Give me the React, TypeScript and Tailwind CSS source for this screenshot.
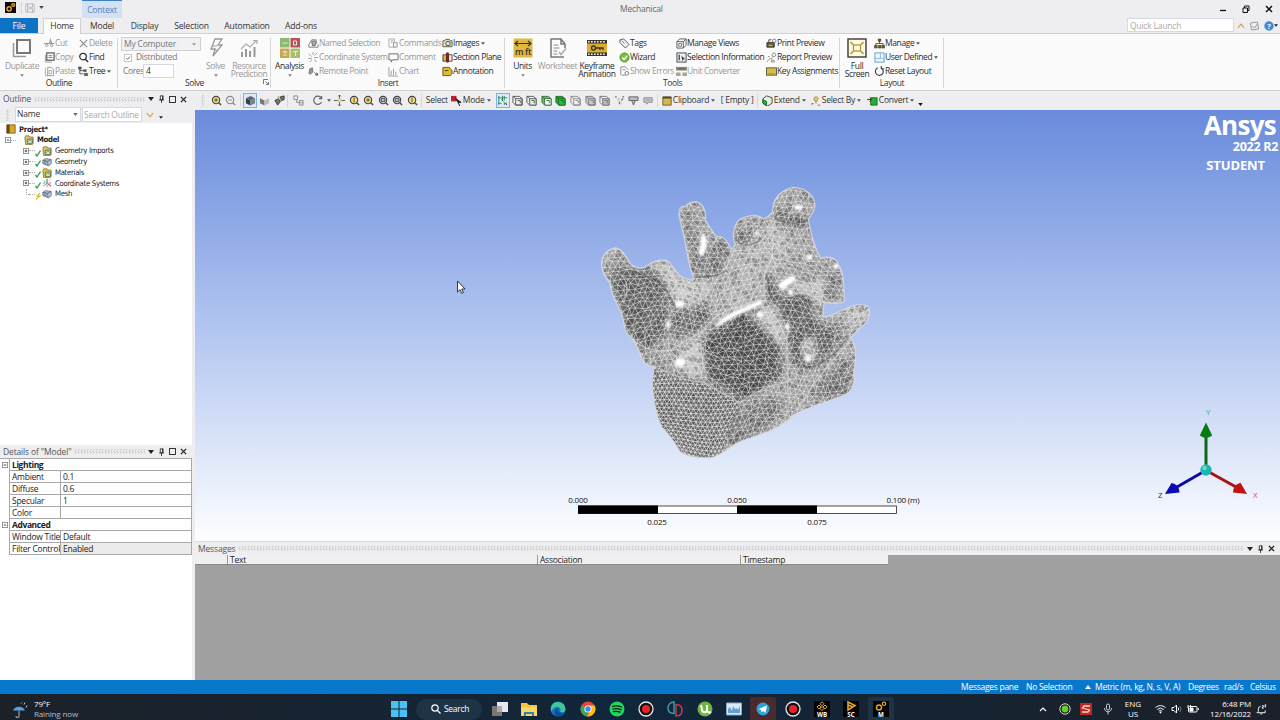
import type { ReactNode } from 'react';
import { clsx } from 'clsx';

/* ---------- icons ---------- */

type IconProps = { children: ReactNode; className?: string; box?: number };

const Icon = ({ children, className = 'w-[11px] h-[11px]', box = 12 }: IconProps) => (
  <svg viewBox={`0 0 ${box} ${box}`} className={clsx('shrink-0', className)} fill="none" stroke="#555" strokeWidth={1}>
    {children}
  </svg>
);

const Caret = ({ className = 'w-[4px] h-[3px] text-[#555]' }: { className?: string }) => (
  <svg viewBox="0 0 6 4" className={clsx('shrink-0', className)} fill="currentColor">
    <path d="M0 0h6L3 4z" />
  </svg>
);

const CutIcon = () => (
  <Icon>
    <path d="M0 6h11M6 6l1-4 1.500 4" stroke="#999" strokeWidth="1.200" />
    <circle cx="3" cy="8" r="1.3" stroke="#999" />
    <circle cx="8.500" cy="8" r="1.300" stroke="#999" />
  </Icon>
);
const CopyIcon = () => (
  <Icon>
    <path d="M1.500 3v8h7" stroke="#999" />
    <rect x="3" y="1" width="8" height="8" stroke="#777" strokeWidth="1.600" />
    <path d="M5 4h4M5 6h4" stroke="#777" />
  </Icon>
);
const PasteIcon = () => (
  <Icon>
    <path d="M1.500 2v8.500h3" stroke="#aaa" />
    <path d="M4 1.500h4l2.500 2.500v6.500H4z" stroke="#999" />
    <path d="M5.500 5h3v3.500h-3z" stroke="#aaa" />
  </Icon>
);
const DeleteIcon = () => (
  <Icon><path d="M2 2l8 8M10 2l-8 8" stroke="#888" strokeWidth="1.200" /></Icon>
);
const FindIcon = () => (
  <Icon>
    <circle cx="5.500" cy="5" r="3.600" stroke="#333" strokeWidth="1.400" />
    <path d="M8 8l3 3" stroke="#333" strokeWidth="1.600" />
  </Icon>
);
const TreeIcon = () => (
  <Icon>
    <path d="M2 3v5.500h4M2 5h4" stroke="#555" />
    <path d="M.5 1h3v2.500h-3zM6 4h3v2H6zM7 8h3.500v2.500H7z" fill="#6a6445" stroke="#444" strokeWidth=".6" />
  </Icon>
);
const NamedSelIcon = () => (
  <Icon>
    <path d="M1 10h10V7M1 10V7l3-5h5v4" stroke="#777" />
    <path d="M4 4l3-1 2 2-1 3-3 .5z" fill="#aaa" stroke="#666" />
  </Icon>
);
const CoordIcon = () => (
  <Icon><path d="M1 2l3 3M10 1L7 4M0 7h4M7 6h4M2 11l2-3M9 11L7 8M5.500 0v3" stroke="#999" /></Icon>
);
const RemoteIcon = () => (
  <Icon>
    <path d="M1 8l1-5 3-1v5l-3 2z" fill="#999" stroke="#777" />
    <path d="M6 6l2 2" stroke="#999" />
    <circle cx="9.500" cy="9" r="1.300" fill="#888" stroke="#777" />
  </Icon>
);
const CommandsIcon = () => (
  <Icon>
    <path d="M1 1h6v9H1zM3 3h3M3 5h2" stroke="#aaa" />
    <path d="M6 5h4v5H6z" stroke="#999" fill="#eee" />
  </Icon>
);
const CommentIcon = () => (
  <Icon><path d="M1 2h10v6.500H5L3.500 11V8.500H1z" stroke="#666" /></Icon>
);
const ChartIcon = () => (
  <Icon><path d="M1 1v10h10M3.500 10V5M6 10V3M8.500 10V6" stroke="#999" /></Icon>
);
const ImagesIcon = () => (
  <Icon>
    <path d="M1 3h2l1-1.500h4L9 3h2v6.500H1z" fill="#f1e5a8" stroke="#555" />
    <circle cx="6.500" cy="6" r="2.500" fill="#ddd" stroke="#444" />
  </Icon>
);
const SectionPlaneIcon = () => (
  <Icon>
    <path d="M1 3h4v7H1z" fill="#d5b52d" stroke="#444" />
    <path d="M7 3h4v7H7z" fill="#f4efd8" stroke="#444" />
    <path d="M5 1h2v10H5z" fill="#8a2626" stroke="#702020" />
  </Icon>
);
const AnnotationIcon = () => (
  <Icon><path d="M1 1.500h7L11 5v3l-2 2.500H1z" fill="#e2bd25" stroke="#5f5118" /><path d="M3 5h4" stroke="#333" /></Icon>
);
const TagsIcon = () => (
  <Icon><path d="M1 2l4-1 6 6-4 4-6-6z" fill="#eee" stroke="#555" /><path d="M3 3l3 3" stroke="#777" /></Icon>
);
const WizardIcon = () => (
  <Icon><circle cx="6" cy="6" r="5" fill="#79bf3b" stroke="#4f9a28" /><path d="M3.500 6l2 2.200L9 4" stroke="#fff" strokeWidth="1.400" /></Icon>
);
const ErrorsIcon = () => (
  <Icon><path d="M2 10V1h5l3 3M3 10h4M4 4h3" stroke="#888" /><circle cx="8.500" cy="8" r="2" stroke="#777" /></Icon>
);
const ManageViewsIcon = () => (
  <Icon><path d="M1 4l3-3h7v7l-3 3H1zM1 4h7v7M8 4l3-3" stroke="#555" /><path d="M3 6h3v3H3z" stroke="#777" /></Icon>
);
const SelInfoIcon = () => (
  <Icon>
    <rect x="1" y="1" width="10" height="10" fill="#e8eef6" stroke="#444" />
    <path d="M3.500 3v6" stroke="#345" strokeWidth="1.400" />
    <path d="M6 4l4 4-2 0-1 2z" fill="#333" stroke="none" />
  </Icon>
);
const UnitIcon = () => (
  <Icon>
    <path d="M0 1h12v4H0z" fill="#8f8b74" stroke="none" />
    <path d="M0 7h5v4H0zM7 7h5v4H7z" fill="#aaa696" stroke="none" />
    <path d="M2 3h8" stroke="#555" />
  </Icon>
);
const PrintPreviewIcon = () => (
  <Icon>
    <path d="M1 5h8v5H1z" fill="#6c6330" stroke="#333" />
    <path d="M3 5V2h3" stroke="#444" />
    <circle cx="9" cy="3" r="1.900" stroke="#777" />
    <path d="M3 8h4" stroke="#ddd067" />
  </Icon>
);
const ReportIcon = () => (
  <Icon>
    <path d="M1 11l3-4 2 1 1-3" stroke="#a3974d" />
    <path d="M2 5h2M6 9h3v2H6z" stroke="#888" />
    <circle cx="8.500" cy="3" r="2" stroke="#888" />
  </Icon>
);
const KeyIcon = () => (
  <Icon><rect x=".5" y="2" width="11" height="8" fill="#d6bb4d" stroke="#63592b" /><path d="M2 8.500h8" stroke="#a08d3e" /></Icon>
);
const ManageIcon = () => (
  <Icon>
    <path d="M6 3v3M2 8V6h8v2" stroke="#555" />
    <path d="M4.500 1h3v2.500h-3zM.5 8h3v3h-3zM4.700 8h3v3h-3zM8.600 8h3v3h-3z" fill="#6d6023" stroke="#443d1d" strokeWidth=".6" />
  </Icon>
);
const UserDefIcon = () => (
  <Icon><rect x="1" y="1" width="10" height="10" fill="#eef7fc" stroke="#5a9dc4" /><path d="M7 1v6M1 7h10" stroke="#8bbdd8" /></Icon>
);
const ResetIcon = () => (
  <Icon><path d="M8 2.200A4.300 4.300 0 1 1 4 2M8 0v3h3" stroke="#444" strokeWidth="1.300" /></Icon>
);

/* ---------- ribbon ---------- */

type CmdProps = { icon: ReactNode; text: string; off?: boolean; caret?: boolean };

const Cmd = ({ icon, text, off, caret }: CmdProps) => (
  <div className={clsx('flex items-center h-[14px] whitespace-nowrap', off ? 'text-[#999]' : 'text-[#2b2b2b]')}>
    {icon}
    <span>{text}</span>
    {caret && <Caret className="w-[4px] h-[3px] ml-[2px] text-[#555]" />}
  </div>
);

const Col = ({ className, children }: { className: string; children: ReactNode }) => (
  <div className={clsx('flex flex-col shrink-0 pt-[3px]', className)}>{children}</div>
);

type BigProps = { icon: ReactNode; lines: string[]; className: string; off?: boolean; caret?: boolean };

const Big = ({ icon, lines, className, off, caret }: BigProps) => (
  <div className={clsx('flex flex-col items-center shrink-0 pt-[4px] whitespace-nowrap', off ? 'text-[#999]' : 'text-[#2b2b2b]', className)}>
    {icon}
    <div className="mt-[4px] leading-[7.500px] text-center">
      {lines.map((l) => <div key={l}>{l}</div>)}
    </div>
    {caret && <Caret className="w-[4px] h-[3px] mt-[4px] text-[#888]" />}
  </div>
);

const Group = ({ label, className, children }: { label: string; className: string; children: ReactNode }) => (
  <div className={clsx('flex flex-col shrink-0 relative', className)}>
    <div className="flex h-[44px]">{children}</div>
    <div className="text-center text-[#333] leading-[10px]">{label}</div>
    <div className="absolute right-0 top-[4px] w-px h-[50px] bg-[#d6d6d8]" />
  </div>
);

const bigIcon = 'w-[20px] h-[20px]';

const Ribbon = () => (
  <div className="flex h-[58px] bg-[#fbfbfb] border-t border-b border-[#d0d0d2] text-[8.500px] tracking-[-0.38px] shrink-0">
    <Group label="Outline" className="w-[118px]">
      <Big
        off caret className="w-[44px]" lines={['Duplicate']}
        icon={
          <Icon className={bigIcon} box={20}>
            <path d="M1.500 5v13.500H14" stroke="#999" strokeWidth="1.500" />
            <rect x="5" y="2" width="13" height="13" stroke="#777" strokeWidth="2" />
          </Icon>
        }
      />
      <Col className="w-[34px]">
        <Cmd off icon={<CutIcon />} text="Cut" />
        <Cmd off icon={<CopyIcon />} text="Copy" />
        <Cmd off icon={<PasteIcon />} text="Paste" />
      </Col>
      <Col className="w-[38px]">
        <Cmd off icon={<DeleteIcon />} text="Delete" />
        <Cmd icon={<FindIcon />} text="Find" />
        <Cmd icon={<TreeIcon />} text="Tree" caret />
      </Col>
    </Group>

    <Group label="Solve" className="w-[153px]">
      <Col className="w-[83px] pl-[3px] text-[#777]">
        <div className="flex items-center justify-between w-[80px] h-[14px] border border-[#d0d0d4] bg-[#f1f1f3] pl-[2px] pr-[4px] tracking-[-0.2px]">
          <span>My Computer</span>
          <Caret className="w-[4px] h-[3px] text-[#999]" />
        </div>
        <div className="flex items-center h-[14px] pl-[3px]">
          <div className="w-[8px] h-[8px] border border-[#c6c6c6] bg-white">
            <svg viewBox="0 0 8 8" className="w-full h-full" fill="none" stroke="#666" strokeWidth="1.200"><path d="M1.500 4l2 2 3-4" /></svg>
          </div>
          <span className="ml-[4px] tracking-[-0.3px]">Distributed</span>
        </div>
        <div className="flex items-center h-[14px] pl-[2px]">
          <span className="w-[20px]">Cores</span>
          <div className="w-[31px] h-[14px] border border-[#d3d7e0] bg-white text-[#333] pl-[2px] leading-[12px]">4</div>
        </div>
      </Col>
      <Big
        off caret className="w-[29px]" lines={['Solve']}
        icon={
          <Icon className={bigIcon} box={20}>
            <path d="M9 1l7-0-4 6h4L7 18l2-7H5z" stroke="#999" strokeWidth="1.300" />
            <path d="M6 8h5M8 12h3" stroke="#999" />
          </Icon>
        }
      />
      <Big
        off className="w-[38px]" lines={['Resource', 'Prediction']}
        icon={
          <Icon className={bigIcon} box={20}>
            <path d="M3 19v-5M7 19v-8M11 19v-6M15.500 19V9" stroke="#999" strokeWidth="2" />
            <path d="M2 11l5-5 4 3 6-6M14 2.500h4V6" stroke="#aaa" strokeWidth="1.200" />
          </Icon>
        }
      />
      <svg viewBox="0 0 6 6" className="absolute right-[2px] bottom-[5px] w-[6px] h-[6px]" fill="none" stroke="#777"><path d="M.5 5V.5H5M2.500 2.500L5 5M5.500 3v2.500H3" /></svg>
    </Group>

    <Group label="Insert" className="w-[234px]">
      <Big
        caret className="w-[37px]" lines={['Analysis']}
        icon={
          <Icon className={bigIcon} box={20}>
            <path d="M0 0h9.500v9.500H0z" fill="#8cba6f" stroke="none" />
            <path d="M10.500 0H20v9.500h-9.500z" fill="#b5555a" stroke="none" />
            <path d="M0 10.500h9.500V20H0z" fill="#c7a64f" stroke="none" />
            <path d="M10.500 10.500H20V20h-9.500z" fill="#a9be6e" stroke="none" />
            <path d="M2.500 5h5M13.500 3h3v4h-3zM2.500 14h5M3 17h4M5 12.500v3M13 13.500h5M15.500 13v5" stroke="#e9ead2" />
          </Icon>
        }
      />
      <Col className="w-[80px]">
        <Cmd icon={<NamedSelIcon />} text="Named Selection" off />
        <Cmd icon={<CoordIcon />} text="Coordinate System" off />
        <Cmd icon={<RemoteIcon />} text="Remote Point" off />
      </Col>
      <Col className="w-[54px]">
        <Cmd icon={<CommandsIcon />} text="Commands" off />
        <Cmd icon={<CommentIcon />} text="Comment" off />
        <Cmd icon={<ChartIcon />} text="Chart" off />
      </Col>
      <Col className="w-[62px]">
        <Cmd icon={<ImagesIcon />} text="Images" caret />
        <Cmd icon={<SectionPlaneIcon />} text="Section Plane" />
        <Cmd icon={<AnnotationIcon />} text="Annotation" />
      </Col>
    </Group>

    <Group label="Tools" className="w-[335px]">
      <Big
        caret className="w-[35px]" lines={['Units']}
        icon={
          <Icon className={bigIcon} box={20}>
            <path d="M.5 .5h19v19H.5z" fill="#e0b840" stroke="none" />
            <path d="M2 5.500h16M5 3L2 5.500 5 8M15 3l3 2.500L15 8" stroke="#3b3420" strokeWidth="1.200" />
            <text x="10" y="17" textAnchor="middle" fontSize="9" fontWeight="600" fill="#3b3420" stroke="none">m ft</text>
          </Icon>
        }
      />
      <Big
        off className="w-[35px]" lines={['Worksheet']}
        icon={
          <Icon className={bigIcon} box={20}>
            <path d="M17 10V6l-4-5H3v18h13M13 1v5h4" stroke="#777" strokeWidth="1.500" />
            <path d="M5.500 7h5M5.500 10h6M5.500 13h4M5.500 16h4" stroke="#888" />
            <path d="M11 14l2 2.500 5-6" stroke="#aaa" strokeWidth="1.500" />
          </Icon>
        }
      />
      <Big
        className="w-[44px]" lines={['Keyframe', 'Animation']}
        icon={
          <Icon className={bigIcon} box={20}>
            <path d="M0 2h20v16H0z" fill="#3a3424" stroke="none" />
            <path d="M0 5.500h20v9H0z" fill="#d9ae35" stroke="none" />
            <path d="M1 3.700h18M1 16.300h18" stroke="#eee" strokeWidth="1.600" strokeDasharray="1.700 1.300" />
            <circle cx="6.500" cy="10" r="2" stroke="#3a3424" strokeWidth="1.300" />
            <path d="M8.500 10H16v2M13 10v2" stroke="#3a3424" strokeWidth="1.300" />
          </Icon>
        }
      />
      <Col className="w-[57px]">
        <Cmd icon={<TagsIcon />} text="Tags" />
        <Cmd icon={<WizardIcon />} text="Wizard" />
        <Cmd icon={<ErrorsIcon />} text="Show Errors" off />
      </Col>
      <Col className="w-[90px]">
        <Cmd icon={<ManageViewsIcon />} text="Manage Views" />
        <Cmd icon={<SelInfoIcon />} text="Selection Information" />
        <Cmd icon={<UnitIcon />} text="Unit Converter" off />
      </Col>
      <Col className="w-[73px]">
        <Cmd icon={<PrintPreviewIcon />} text="Print Preview" />
        <Cmd icon={<ReportIcon />} text="Report Preview" />
        <Cmd icon={<KeyIcon />} text="Key Assignments" />
      </Col>
    </Group>

    <Group label="Layout" className="w-[104px]">
      <Big
        className="w-[34px]" lines={['Full', 'Screen']}
        icon={
          <Icon className={bigIcon} box={20}>
            <rect x="1" y="1" width="18" height="18" fill="#fdfbe8" stroke="#3a3a34" strokeWidth="1.400" />
            <rect x="6.500" y="7" width="7" height="6" stroke="#b59a2b" strokeWidth="1.300" />
            <path d="M3.500 4l3 3M16.500 4l-3 3M3.500 16l3-3M16.500 16l-3-3" stroke="#b59a2b" strokeWidth="1.500" />
          </Icon>
        }
      />
      <Col className="w-[68px]">
        <Cmd icon={<ManageIcon />} text="Manage" caret />
        <Cmd icon={<UserDefIcon />} text="User Defined" caret />
        <Cmd icon={<ResetIcon />} text="Reset Layout" />
      </Col>
    </Group>
  </div>
);

/* ---------- title and tabs ---------- */

const GearsIcon = ({ className }: { className: string }) => (
  <svg viewBox="0 0 12 12" className={className} fill="none" stroke="#e9a72e" strokeWidth="1.500">
    <path d="M0 0h12v12H0z" fill="#0d0b08" stroke="none" />
    <circle cx="4.500" cy="7.500" r="2.300" />
    <circle cx="9" cy="3.300" r="1.500" />
  </svg>
);

const TitleBar = () => (
  <div className="flex h-[18px] items-center text-[8.500px] tracking-[-0.2px] shrink-0">
    <div className="flex items-center w-[82px] pl-[5px] pb-[3px]">
      <GearsIcon className="w-[11px] h-[11px]" />
      <div className="w-px h-[12px] bg-[#d4d4d6] ml-[5px] mr-[3px]" />
      <Icon className="w-[10px] h-[10px]">
        <path d="M1 1h9l1 1v9H1zM3 1v4h6V1M3 11V7h6v4" stroke="#a9b0bb" />
      </Icon>
      <Caret className="w-[5px] h-[3px] ml-[4px] text-[#444]" />
    </div>
    <div className="w-[40px] h-[18px] bg-[#d3e1f5] border-t border-[#3d7fc8] text-[#5580b8] text-center leading-[18px]">Context</div>
    <div className="flex-1 pl-[498px] text-[#666] leading-[18px]">Mechanical</div>
    <div className="flex items-center gap-[15px] pr-[7px]">
      <svg viewBox="0 0 8 8" className="w-[8px] h-[8px]" stroke="#111" strokeWidth="1.300"><path d="M1 5.500h6" /></svg>
      <svg viewBox="0 0 8 8" className="w-[8px] h-[8px]" stroke="#111" fill="none"><path d="M1 3h4.500v4.500H1zM2.500 3V1H7v4.500H5.500" /></svg>
      <svg viewBox="0 0 8 8" className="w-[8px] h-[8px]" stroke="#111" strokeWidth="1.500"><path d="M1 1l6 6M7 1L1 7" /></svg>
    </div>
  </div>
);

const TabRow = () => (
  <div className="flex h-[15px] items-stretch text-[8.600px] tracking-[-0.2px] leading-[16px] text-[#333] shrink-0">
    <div className="w-[38px] bg-[#0b72c5] text-white text-center">File</div>
    <div className="w-[5px]" />
    <div className="w-[38px] bg-[#fbfbfb] border border-b-0 border-[#d0d0d2] text-center leading-[14px] h-[16px] relative">Home</div>
    {[
      ['Model', 'w-[42px]'],
      ['Display', 'w-[43px]'],
      ['Selection', 'w-[51px]'],
      ['Automation', 'w-[60px]'],
      ['Add-ons', 'w-[48px]'],
    ].map(([name, w]) => (
      <div key={name} className={clsx('text-center', w)}>{name}</div>
    ))}
    <div className="flex-1" />
    <div className="w-[107px] h-[14px] border border-[#d5d9e2] bg-white text-[#aaa] text-[8.500px] leading-[13px] pl-[2px]">Quick Launch</div>
    <div className="flex items-center gap-[4px] pl-[3px] pr-[2px]">
      <svg viewBox="0 0 9 6" className="w-[8px] h-[6px]" fill="none" stroke="#d6a437" strokeWidth="1.300"><path d="M1 5l3.500-4L8 5" /></svg>
      <svg viewBox="0 0 10 10" className="w-[11px] h-[10px]" fill="none" stroke="#999"><path d="M1 2l7-1 1 7-7 1zM3 5l2 2 3-4" /></svg>
      <div className="flex items-center">
        <svg viewBox="0 0 10 10" className="w-[10px] h-[10px]">
          <circle cx="5" cy="5" r="4.700" fill="#3c8ad4" />
          <text x="5" y="7.700" fontSize="7.500" fontWeight="700" fill="#fff" textAnchor="middle">?</text>
        </svg>
        <Caret className="w-[4px] h-[3px] text-[#222]" />
      </div>
    </div>
  </div>
);

/* ---------- left panels ---------- */

const dots = 'bg-[repeating-conic-gradient(#d6d6d8_0_25%,#efeff1_0_50%)] bg-[size:3px_3px]';

const Pin = () => (
  <svg viewBox="0 0 8 10" className="w-[7px] h-[8px]" fill="none" stroke="#222"><path d="M2.500 1h3.500v5H2.500zM5.300 1v5M1 6.200h6M4 6v4" /></svg>
);
const Cross = () => (
  <svg viewBox="0 0 8 8" className="w-[7px] h-[7px]" stroke="#222" strokeWidth="1.500"><path d="M1 1l6 6M7 1L1 7" /></svg>
);

const PanelHeader = ({ title, square = true, className }: { title: string; square?: boolean; className: string }) => (
  <div className={clsx('flex items-center bg-[#eeeef0] text-[8.500px] tracking-[-0.15px] text-[#555] shrink-0', className)}>
    <span className="leading-[12px]">{title}</span>
    <div className={clsx('flex-1 h-[5px] mx-[3px]', dots)} />
    <div className="flex items-center gap-[4px]">
      <Caret className="w-[6px] h-[4px] text-[#222]" />
      <Pin />
      {square && <div className="w-[7px] h-[7px] border border-[#333]" />}
      <Cross />
    </div>
  </div>
);

const FolderIcon = ({ tint = '#d9c56a' }: { tint?: string }) => (
  <Icon className="w-[10px] h-[10px]">
    <path d="M1 3l1-2h4l1 1.500h4V10l-1 1.500H2z" fill={tint} stroke="#887631" />
    <path d="M4 5h6v5H4z" fill="#e8ecd8" stroke="#4f654d" />
    <path d="M5 8l2-2 2 2" stroke="#357a5c" />
  </Icon>
);
const SolidIcon = () => (
  <Icon className="w-[10px] h-[10px]">
    <path d="M1 4l3-2 7 1v5l-3 2.500L1 8z" fill="#c3ccd6" stroke="#566779" />
    <path d="M1 4l6 1 4-2M7 5v5" stroke="#566779" />
    <circle cx="4" cy="6.500" r="1.200" stroke="#566779" />
  </Icon>
);
const AxesIcon = () => (
  <Icon className="w-[10px] h-[10px]">
    <path d="M6 6V1" stroke="#3a9a4f" strokeWidth="1.400" />
    <path d="M5 7L1 10M2 3l2 2M9 3l1-1M1 6h3M8 6h3M6 8v3" stroke="#7a889b" />
    <path d="M7 7l4 3" stroke="#d45454" strokeWidth="1.400" />
    <circle cx="6" cy="6.500" r="1" fill="#37a99a" stroke="none" />
  </Icon>
);
const Expander = ({ minus }: { minus?: boolean }) => (
  <svg viewBox="0 0 7 7" className="w-[6px] h-[6px] shrink-0" fill="#fff" stroke="#888"><rect x=".5" y=".5" width="6" height="6" /><path d={minus ? 'M2 3.500h3' : 'M2 3.500h3M3.500 2v3'} stroke="#333" /></svg>
);
const Check = ({ bolt }: { bolt?: boolean }) => (
  <svg viewBox="0 0 6 8" className="w-[6px] h-[8px] shrink-0 mt-[3px]" fill="none" strokeWidth="1.300">
    {bolt ? <path d="M5 1L2 4h3L1 7.500" stroke="#e3c52a" /> : <path d="M.5 5l1.500 2L5.500 1.500" stroke="#339a4c" />}
  </svg>
);

const treeItems = [
  { name: 'Geometry Imports', icon: <FolderIcon /> },
  { name: 'Geometry', icon: <SolidIcon /> },
  { name: 'Materials', icon: <FolderIcon tint="#e6c63f" /> },
  { name: 'Coordinate Systems', icon: <AxesIcon /> },
  { name: 'Mesh', icon: <SolidIcon />, leaf: true },
];

const OutlinePanel = () => (
  <div className="flex flex-col h-[353px] shrink-0">
    <PanelHeader title="Outline" className="h-[14px] pl-[3px] pr-[5px]" />
    <div className="flex items-center h-[17px] bg-[#eeeef0] text-[8.500px] tracking-[-0.15px] pl-[6px] shrink-0">
      <div className={clsx('w-[4px] h-[12px]', dots)} />
      <div className="flex items-center justify-between ml-[5px] w-[66px] h-[15px] bg-white border border-[#d5d9e2] pl-[1px] pr-[2px] text-[#333]">
        <span>Name</span>
        <Caret className="w-[5px] h-[3px] text-[#666]" />
      </div>
      <div className="ml-px w-[60px] h-[15px] leading-[13px] bg-white border border-[#d5d9e2] pl-[1px] text-[#aaa] tracking-[-0.25px] whitespace-nowrap">Search Outline</div>
      <svg viewBox="0 0 9 6" className="w-[8px] h-[6px] ml-[4px]" fill="none" stroke="#d6a437" strokeWidth="1.300"><path d="M1 1l3.500 4L8 1" /></svg>
      <Caret className="w-[4px] h-[3px] ml-[5px] mt-[6px] text-[#222]" />
    </div>
    <div className="flex-1 bg-white pt-px font-['DejaVu_Sans_Condensed','DejaVu_Sans',sans-serif] text-[7.700px] tracking-[-0.3px] text-[#222] whitespace-nowrap">
      <div className="flex items-center h-[10.800px] pl-[6px] font-bold">
        <Icon className="w-[10px] h-[10px]">
          <path d="M1 1h3v10H1z" fill="#6d4b16" stroke="#5c4219" />
          <path d="M4 1h7v10H4z" fill="#d9a829" stroke="#7c5a1a" />
        </Icon>
        <span className="ml-[3px]">Project*</span>
      </div>
      <div className="flex items-center h-[10.800px] pl-[5px] font-bold">
        <Expander minus />
        <div className="w-[5px] border-t border-dotted border-[#aaa] mr-[8px]" />
        <FolderIcon />
        <span className="ml-[3px]">Model</span>
      </div>
      {treeItems.map(({ name, icon, leaf }) => (
        <div key={name} className="flex items-center h-[10.800px] pl-[23px]">
          {leaf ? <div className="ml-[3px] w-[3px] h-[6px] mb-[5px] border-l border-b border-dotted border-[#aaa]" /> : <Expander />}
          <div className="w-[6px] border-t border-dotted border-[#aaa]" />
          <Check bolt={leaf} />
          <span className="ml-px">{icon}</span>
          <span className="ml-[3px]">{name}</span>
        </div>
      ))}
    </div>
  </div>
);

const details: [string, string?][] = [
  ['Lighting'],
  ['Ambient', '0.1'],
  ['Diffuse', '0.6'],
  ['Specular', '1'],
  ['Color', ''],
  ['Advanced'],
  ['Window Title', 'Default'],
  ['Filter Control', 'Enabled'],
];

const DetailsPanel = () => (
  <div className="flex flex-col flex-1 bg-white">
    <PanelHeader title={'Details of "Model"'} className="h-[13px] pl-[3px] pr-[5px]" />
    <div className="border-t border-[#a8a8a8] text-[8.500px] tracking-[-0.25px] text-[#222]">
      {details.map(([name, value]) => (
        <div key={name} className="flex h-[12.060px]">
          <div className="w-[9px] flex items-center pl-[2px]">{value === undefined && <Expander minus />}</div>
          {value === undefined ? (
            <div className="flex-1 border-l border-b border-r border-[#a8a8a8] font-bold pl-[2px] leading-[11px] tracking-[-0.4px]">{name}</div>
          ) : (
            <>
              <div className="w-[51px] border-l border-b border-[#a8a8a8] pl-[2px] leading-[11px] whitespace-nowrap">{name}</div>
              <div className={clsx('flex-1 border-l border-b border-r border-[#a8a8a8] pl-[2px] leading-[11px]', value === 'Enabled' && 'bg-[#ebebe9]')}>{value}</div>
            </>
          )}
        </div>
      ))}
    </div>
  </div>
);

/* ---------- graphics toolbar ---------- */

const Zoomer = ({ color = '#444', fill = '#f3dc7a', mark }: { color?: string; fill?: string; mark?: string }) => (
  <Icon>
    <circle cx="5.500" cy="5.500" r="4" fill={fill} stroke={color} strokeWidth="1.200" />
    <path d="M8.500 8.500l2.500 2.500" stroke={color} strokeWidth="1.500" />
    {mark && <path d={mark} stroke={color} />}
  </Icon>
);

const Cube = ({ stroke = '#666', fill = '#f2f2f2', front = 'none' }: { stroke?: string; fill?: string; front?: string }) => (
  <Icon>
    <path d="M1 1.500h7L11 4v7H4L1 8z" fill={fill} stroke={stroke} />
    <path d="M4 4h7v7H4z" fill={front} stroke={stroke} />
    <path d="M1 1.500L4 4M6 6h3v3" stroke={stroke} />
  </Icon>
);

const SolidCube = ({ top, left, right }: { top: string; left: string; right: string }) => (
  <Icon>
    <g stroke="none">
      <path d="M6 1l5 2.500-5 2.500-5-2.500z" fill={top} />
      <path d="M1 3.500L6 6v5.500L1 9z" fill={left} />
      <path d="M11 3.500L6 6v5.500L11 9z" fill={right} />
    </g>
  </Icon>
);

const Cell = ({ className = 'w-[14.600px]', on, children }: { className?: string; on?: boolean; children?: ReactNode }) => (
  <div className={clsx('flex items-center justify-center shrink-0 h-[15px]', className, on && 'border border-[#7fb2dc] bg-[#dcebf8]')}>{children}</div>
);

const Sep = ({ className }: { className: string }) => <div className={clsx('shrink-0 w-px h-[13px] bg-[#d8d8da]', className)} />;

const ToolText = ({ text, className, caret = true }: { text: string; className: string; caret?: boolean }) => (
  <div className={clsx('flex items-center gap-[2px] shrink-0 whitespace-nowrap', className)}>
    <span>{text}</span>
    {caret && <Caret />}
  </div>
);

const GraphicsToolbar = () => (
  <div className="flex items-center h-[18px] bg-[#eeeef0] text-[8.500px] tracking-[-0.25px] text-[#333] pl-[6px] pb-px shrink-0">
    <div className={clsx('w-[4px] h-[12px] mr-[4px]', dots)} />
    <Cell><Zoomer mark="M3.500 5.500h4M5.500 3.500v4" /></Cell>
    <Cell><Zoomer color="#888" fill="none" mark="M3.500 5.500h4" /></Cell>
    <Sep className="mx-[2px]" />
    <Cell on className="w-[14px]"><SolidCube top="#5d666f" left="#353d45" right="#7b848c" /></Cell>
    <Cell><SolidCube top="#eee" left="#777" right="#bbb" /></Cell>
    <Cell>
      <Icon><path d="M1 6l4-2 2 3-3 4zM7 2l4-1v4l-3 1z" fill="#777" stroke="#333" /><path d="M4 3l2-1" stroke="#c8ad36" strokeWidth="2" /></Icon>
    </Cell>
    <Sep className="mx-px" />
    <Cell className="w-[19px]"><Icon><path d="M1 1h4v4H1zM7 6h4v5H7zM4 5v3h3M7 8.500h4" stroke="#888" /></Icon></Cell>
    <Cell className="w-[19px]"><Icon><path d="M10 3a4.500 4.500 0 1 0 .5 4.500M10.500 1v3h-3" stroke="#666" strokeWidth="1.300" /></Icon></Cell>
    <Caret />
    <Cell className="w-[15.500px]">
      <Icon><path d="M6 0v4M6 8v4M0 6h4M8 6h4M4.500 1.500L6 0l1.500 1.500M4.500 10.500L6 12l1.500-1.500" stroke="#555" /><circle cx="6" cy="6" r="1.800" stroke="#d2a92c" /></Icon>
    </Cell>
    <Cell><Zoomer mark="M5.500 3v5" /></Cell>
    <Cell><Zoomer mark="M3.500 5.500h4M5.500 3.500v4" /></Cell>
    <Cell><Zoomer fill="#c9d1d8" mark="M3.500 4h4v3h-4z" /></Cell>
    <Cell><Zoomer fill="#c9d1d8" mark="M3.500 4h4v3h-4z" /></Cell>
    <Cell><Zoomer mark="M5.500 3v5" /></Cell>
    <Sep className="ml-px mr-[4px]" />
    <ToolText text="Select" caret={false} className="w-[25px]" />
    <Icon className="w-[11px] h-[11px] mr-px"><path d="M0 1h6v6H0z" fill="#c2202b" stroke="none" /><path d="M4 3l7 5-3 .5L9.500 12" fill="#222" stroke="#222" /></Icon>
    <ToolText text="Mode" className="w-[33px]" />
    <Cell on className="w-[14px]"><Icon><path d="M2 1v10M6 1v5M1 3h10M1 9h4M8 1v5M8 8v3M10 8v2" stroke="#2c8b5c" /><path d="M5 5l2 2M9 9l2 2" stroke="#333" /></Icon></Cell>
    <Cell><Cube stroke="#555" /></Cell>
    <Cell><Cube stroke="#555" front="#dff0dd" /></Cell>
    <Cell><Cube stroke="#3a6b3e" front="#fff" fill="#5fc069" /></Cell>
    <Cell><Cube stroke="#176b24" front="#22c535" fill="#22a534" /></Cell>
    <Cell><Cube stroke="#888" /></Cell>
    <Cell><Cube stroke="#777" fill="#ccc" /></Cell>
    <Cell><Cube stroke="#777" front="#bbb" /></Cell>
    <Cell><Icon><path d="M1 2h2M5 4h1M9 2h2M6 7v3M8 6l2-2" stroke="#777" strokeWidth="1.400" /><path d="M3 5l2 1M8 9h1" stroke="#d2b43a" /></Icon></Cell>
    <Cell><Icon><path d="M1 2h10v4H1zM4 6l2 5 2-5" fill="#bbb" stroke="#666" /></Icon></Cell>
    <Cell><Icon><path d="M1 3h9v5H6l-2 2V8H1zM3 5.500h5" fill="#ccc" stroke="#888" /></Icon></Cell>
    <Sep className="ml-px mr-[4px]" />
    <Icon className="w-[10px] h-[10px] mr-px"><path d="M1 1h10v10H1z" fill="#d9b64d" stroke="#5f5024" /><path d="M1 2h10" stroke="#444" strokeWidth="2" /></Icon>
    <ToolText text="Clipboard" className="w-[48px]" />
    <ToolText text="[ Empty ]" caret={false} className="w-[36px]" />
    <Sep className="mr-[4px]" />
    <Icon className="w-[11px] h-[11px] mr-px"><path d="M1 4l4-3 6 2v6l-5 3-5-3z" fill="#e8f2e6" stroke="#444" /><path d="M1 5l4 2v5L1 9z" fill="#1fae36" stroke="#176b24" /></Icon>
    <ToolText text="Extend" className="w-[37px]" />
    <Icon className="w-[10px] h-[10px] mr-px"><circle cx="6" cy="3.500" r="2.500" fill="#e7cf68" stroke="#a8872b" /><path d="M6 6v3M1 11v-2h2M8 11h3" stroke="#666" /></Icon>
    <ToolText text="Select By" className="w-[45px]" />
    <Icon className="w-[11px] h-[11px] mr-px"><path d="M4 3h7v8H4z" fill="#22b036" stroke="#176b24" /><path d="M0 5h5M3 3l2 2-2 2" stroke="#333" /></Icon>
    <ToolText text="Convert" className="w-[37px]" />
    <Caret className="w-[5px] h-[3px] ml-[2px] mt-[8px] text-[#111]" />
  </div>
);

/* ---------- 3D view ---------- */

const random = (seed: number) => () => {
  seed = (seed * 16807) % 2147483647;
  return seed / 2147483647;
};

// Warped triangular grid, returned as one path for edges and one for shaded facets
const buildMesh = (cell: number, jitter: number, seed: number) => {
  const rnd = random(seed);
  const cols = Math.ceil(860 / cell);
  const rows = Math.ceil(860 / (cell * 0.86));
  const pts: [number, number][][] = [];
  for (let r = 0; r < rows; r++) {
    pts.push([]);
    for (let c = 0; c < cols; c++) {
      const x = 40 + c * cell + (r % 2) * cell * 0.5;
      const y = 40 + r * cell * 0.86;
      const wx = Math.sin(y / 47) * 7 + Math.sin((x + y) / 83) * 9;
      const wy = Math.sin(x / 53) * 8 + Math.cos((x - y) / 71) * 7;
      pts[r].push([x + wx + (rnd() - 0.5) * jitter, y + wy + (rnd() - 0.5) * jitter]);
    }
  }
  const p = (a: [number, number]) => `${a[0].toFixed(1)} ${a[1].toFixed(1)}`;
  let edges = '';
  let facets = '';
  for (let r = 0; r < rows - 1; r++) {
    for (let c = 1; c < cols - 1; c++) {
      const a = pts[r][c];
      const b = pts[r][c + 1];
      const lo = pts[r + 1][r % 2 ? c : c - 1];
      const hi = pts[r + 1][r % 2 ? c + 1 : c];
      edges += `M${p(lo)}L${p(a)}L${p(hi)}M${p(a)}L${p(b)}`;
      if (rnd() < 0.4) facets += `M${p(a)}L${p(b)}L${p(hi)}z`;
      if (rnd() < 0.25) facets += `M${p(a)}L${p(lo)}L${p(hi)}z`;
    }
  }
  return { edges, facets };
};

const mesh = buildMesh(17, 9, 71);
const fineMesh = buildMesh(13.5, 2.5, 13);

const silhouette =
  'M65 275C68 250 90 235 108 234C130 238 140 265 152 282C165 294 185 298 198 290C215 275 240 268 255 270C275 275 285 305 300 318C320 330 335 330 342 328C330 300 325 270 318 230C312 190 300 160 297 130C297 112 305 108 318 110C320 100 335 94 350 96C372 102 378 125 376 150C388 170 398 188 410 200C428 195 440 212 452 235C458 240 460 232 466 225C455 200 460 165 480 148C500 135 530 132 548 145C560 150 565 135 578 128C575 90 600 60 640 52C680 52 705 80 705 110C700 130 690 140 685 148C690 180 700 225 722 265C745 258 770 262 775 285C788 300 792 330 793 390C790 400 770 402 732 398L728 440C745 445 760 432 790 420C820 405 850 398 865 412C875 435 860 462 840 475C830 485 820 490 812 505C830 525 830 560 822 600C825 640 820 660 800 672C760 690 700 705 640 735C625 755 605 765 585 775C560 790 520 800 480 815C450 830 430 850 400 862C360 868 320 858 300 845C285 820 275 800 245 770C230 740 220 690 217 640C220 610 222 600 220 588C200 590 185 575 180 550C170 530 165 510 145 495C130 480 135 460 125 430C110 400 95 380 90 340C75 320 62 300 65 275Z';

const lowerBody = 'M217 590C260 600 320 640 365 635C400 655 450 680 480 705C460 740 440 780 430 860L300 860L200 700Z';

const Model = () => (
  <g transform="translate(580 170) scale(.33333)">
    <clipPath id="body"><path d={silhouette} /></clipPath>
    <clipPath id="lower"><path d={lowerBody} /></clipPath>
    <filter id="soft" x="-20%" y="-20%" width="140%" height="140%"><feGaussianBlur stdDeviation="10" /></filter>
    <filter id="glint" x="-50%" y="-50%" width="200%" height="200%"><feGaussianBlur stdDeviation="3" /></filter>
    <g clipPath="url(#body)">
      <path d={silhouette} fill="#9f9f9f" />
      <g filter="url(#soft)" fill="#636363">
        <path d="M90 290L120 290L200 300L250 310L265 390L260 490L200 550L140 480L110 380Z" />
        <path d={lowerBody} fill="#555" />
        <path d="M362 520L440 450L490 425L560 490L600 540L602 620L490 695L385 620Z" fill="#505050" />
        <path d="M310 120L330 120L350 250L420 200L450 240L430 310L345 325Z" fill="#7c7c7c" />
        <path d="M470 170L530 200L500 225L465 215Z" />
        <path d="M585 110L640 145L690 140L680 165L600 160Z" />
        <path d="M555 310L575 310L590 380L650 370L700 380L700 430L720 470L780 470L760 540L690 600L640 580L620 480L560 390Z" fill="#626262" />
        <path d="M270 440L370 400L400 440L370 470L280 510Z" fill="#6c6c6c" />
        <path d="M740 300L780 310L785 390L735 390Z" fill="#828282" />
        <path d="M690 690L760 600L815 560L800 670Z" fill="#717171" />
        <path d="M450 750L560 680L620 690L560 780L440 830Z" fill="#787878" />
      </g>
      <g filter="url(#soft)" fill="#c4c4c4">
        <path d="M300 330L400 335L370 385L310 410L290 370Z" />
        <path d="M230 275L275 280L300 340L300 400L265 370Z" />
        <path d="M470 230L560 180L555 380L480 420L410 470L400 400L440 300Z" fill="#afafaf" />
        <path d="M560 150L600 160L640 230L600 300L560 300Z" fill="#b4b4b4" />
        <path d="M290 560L360 490L370 600L350 630L300 600Z" />
        <path d="M530 410L590 410L620 500L590 520Z" />
        <path d="M620 350L730 330L725 430L690 370Z" />
        <path d="M660 520L700 500L710 560L680 580Z" fill="#d5d5d5" />
        <path d="M800 420L860 415L860 450L820 470Z" />
      </g>
      <path d={mesh.facets} fill="#222" opacity=".24" />
      <path d={mesh.edges} fill="none" stroke="#f0f0f0" strokeWidth="2.300" opacity=".72" />
      <g clipPath="url(#lower)">
        <path d={lowerBody} fill="#666" />
        <path d={fineMesh.facets} fill="#222" opacity=".3" />
        <path d={fineMesh.edges} fill="none" stroke="#f2f2f2" strokeWidth="2.400" opacity=".85" />
      </g>
      <g fill="none" stroke="#dcdcdc" strokeWidth="4" opacity=".6">
        <path d="M160 510C190 540 260 555 290 530C320 505 350 500 370 480C400 440 420 425 480 410C520 390 560 380 600 420" />
        <path d="M217 590C260 600 320 640 365 635C400 655 450 680 480 700C530 660 570 645 615 638" />
        <path d="M362 520C365 570 372 600 380 630M625 480C610 540 632 600 622 650C630 690 635 720 600 765" />
        <path d="M650 725C690 650 740 590 812 510" />
        <path d="M128 320C150 345 140 380 130 400M265 290C290 330 300 360 295 400" />
        <path d="M555 300C550 340 550 370 560 400M560 150C580 190 590 250 555 310M370 320C375 270 400 220 412 202" />
        <path d="M600 360C640 340 690 345 722 335M632 400C640 360 690 350 705 400" />
        <path d="M375 390C390 340 450 300 462 235" />
      </g>
      <g fill="none" stroke="#444" strokeWidth="5" opacity=".4">
        <path d="M468 210C490 235 525 225 545 205M582 140C610 165 650 165 685 150" />
        <path d="M490 430L488 620M490 430L440 500M560 310L572 385M630 385C650 370 675 385 690 405" />
        <path d="M150 300C190 320 240 320 265 370L290 420" />
        <path d="M345 322C390 320 420 318 440 300M670 590C720 600 780 540 805 500" />
      </g>
      <g fill="#fff" filter="url(#glint)">
        <path d="M408 465C430 435 480 415 545 390L548 402C500 420 460 440 412 470Z" />
        <path d="M366 185C380 195 388 225 370 258C355 260 352 245 362 225Z" />
        <path d="M592 350C600 335 630 315 648 318L645 332L610 358Z" />
        <ellipse cx="655" cy="112" rx="14" ry="7" />
        <ellipse cx="530" cy="190" rx="7" ry="6" />
        <ellipse cx="300" cy="578" rx="16" ry="13" />
        <ellipse cx="298" cy="402" rx="13" ry="10" />
        <ellipse cx="265" cy="463" rx="6" ry="12" />
        <ellipse cx="540" cy="434" rx="11" ry="8" />
        <ellipse cx="688" cy="262" rx="10" ry="7" />
        <ellipse cx="768" cy="289" rx="7" ry="8" />
        <ellipse cx="623" cy="470" rx="6" ry="12" />
        <ellipse cx="684" cy="566" rx="8" ry="10" />
        <ellipse cx="632" cy="368" rx="7" ry="9" />
      </g>
    </g>
    <path d={silhouette} fill="none" stroke="#d9dbe0" strokeWidth="4" opacity=".8" />
  </g>
);

const ScaleBar = () => (
  <g className="text-[8px] tracking-[-0.2px]" fill="#111" textAnchor="middle">
    <rect x="578.500" y="506" width="318" height="7.500" fill="#fff" stroke="#222" strokeWidth=".8" />
    <path d="M578 505.600h80v8.200h-80zM737 505.600h80v8.200h-80z" fill="#000" />
    <text x="578" y="503">0.000</text>
    <text x="737" y="503">0.050</text>
    <text x="903" y="503">0.100 (m)</text>
    <text x="657" y="525">0.025</text>
    <text x="817" y="525">0.075</text>
  </g>
);

const Triad = () => (
  <g className="text-[8px]">
    <path d="M1206 468V436" stroke="#0b6b12" strokeWidth="3" />
    <path d="M1206 422.500L1199.800 435.500Q1206 440 1212.200 435.500Z" fill="#0a7a12" />
    <path d="M1203 472L1177 487" stroke="#0a0aa8" strokeWidth="3" />
    <path d="M1165 494L1171.500 483Q1179 484 1179.500 492.500Z" fill="#0b0bb5" />
    <path d="M1209 472L1236 487" stroke="#a91414" strokeWidth="3" />
    <path d="M1247 494L1240.500 482.800Q1233 485 1233 492.500Z" fill="#c31212" />
    <circle cx="1206" cy="470" r="5.700" fill="#1fb5ae" />
    <circle cx="1204.500" cy="468" r="2.200" fill="#5fdcd3" />
    <text x="1206" y="415" fill="#4fa06a">Y</text>
    <text x="1253" y="498" fill="#d0506a">X</text>
    <text x="1158" y="498" fill="#2c2c78">Z</text>
  </g>
);

const Viewport = () => (
  <div className="h-[431px] shrink-0 relative bg-linear-to-b from-[#6a8bdc] to-[#fdfeff]">
    <svg viewBox="195 110 1085 431" className="w-[1085px] h-[431px] block">
      <Model />
      <ScaleBar />
      <Triad />
      <path d="M457.500 281v11l2.500-2.300 1.700 3.700 1.700-.8-1.700-3.600h3.400z" fill="#fff" stroke="#222" strokeWidth=".9" />
    </svg>
    <div className="absolute top-0 right-[2px] flex flex-col text-white font-bold text-right">
      <div className="text-[26px] leading-[30px] tracking-[-0.7px] pr-[2px]">Ansys</div>
      <div className="text-[12.500px] leading-[13px] tracking-[-0.3px]">2022 R2</div>
      <div className="text-[13px] leading-[24px] pr-[13px] tracking-[-0.1px]">STUDENT</div>
    </div>
  </div>
);

const Messages = () => (
  <div className="flex flex-col flex-1 bg-[#a0a0a0]">
    <PanelHeader title="Messages" square={false} className="h-[14px] border-t border-[#dcdcde] pl-[3px] pr-[5px]" />
    <div className="flex h-[10px] w-[693px] bg-[#f0f0f1] border-b border-[#888] text-[8.500px] leading-[10px] text-[#222] tracking-[-0.25px]">
      <div className="w-[32px]" />
      <div className="w-[310px] border-l border-[#999] pl-[2px]">Text</div>
      <div className="w-[203px] border-l border-[#999] pl-[2px]">Association</div>
      <div className="flex-1 border-l border-[#999] pl-[2px]">Timestamp</div>
    </div>
  </div>
);

/* ---------- bottom bars ---------- */

const StatusBar = () => (
  <div className="flex items-center justify-end h-[14px] bg-[#0878cd] text-white text-[8.500px] tracking-[-0.27px] pr-[5px] shrink-0 whitespace-nowrap">
    <span className="w-[65px]">Messages pane</span>
    <span className="w-[59px]">No Selection</span>
    <svg viewBox="0 0 6 4" className="w-[6px] h-[4px] mr-[4px]" fill="#fff"><path d="M0 4h6L3 0z" /></svg>
    <span className="w-[93px]">Metric (m, kg, N, s, V, A)</span>
    <span className="w-[36px]">Degrees</span>
    <span className="w-[26px]">rad/s</span>
    <span className="w-[25px]">Celsius</span>
  </div>
);

const AppButton = ({ children, active }: { children: ReactNode; active?: string }) => (
  <div className="flex items-center justify-center w-[29.300px] h-[24px] shrink-0">
    <div className={clsx('flex items-center justify-center w-[26px] h-[24px] rounded-[2px]', active)}>
      <svg viewBox="0 0 16 16" className="w-[16px] h-[16px] overflow-visible" fill="none">{children}</svg>
    </div>
  </div>
);

const Recorder = () => (
  <>
    <circle cx="8" cy="8" r="7" fill="#111" stroke="#e8e8e8" strokeWidth="1.300" />
    <circle cx="8" cy="8" r="4" fill="#ec1f2b" />
  </>
);

const AnsysTile = ({ label, children }: { label: string; children: ReactNode }) => (
  <>
    <path d="M0 0h16v16H0z" fill="#050505" />
    {children}
    <text x="8" y="15.500" textAnchor="middle" fontSize="6.200" fontWeight="700" fill="#fff">{label}</text>
  </>
);

const Taskbar = () => (
  <div className="flex items-center h-[26px] text-white bg-linear-to-r from-[#1c2128] via-[#10263a] to-[#1b2028] text-[8px] shrink-0 pt-[4px]">
    <div className="flex items-center w-[390px] pl-[12px]">
      <svg viewBox="0 0 16 16" className="w-[16px] h-[17px]" fill="none">
        <path d="M1 9a6.500 6 0 0 1 12 0z" fill="#4fa3e6" />
        <path d="M7 9v5.500a1.500 1.500 0 0 1-3 0" stroke="#9aa3ad" strokeWidth="1.200" />
        <path d="M9 2l1-1M12 3l1-2M14 6l1-2M8 3l0 0" stroke="#c6cfda" />
      </svg>
      <div className="ml-[6px] leading-[10.500px] tracking-[-0.15px]">
        <div>79°F</div>
        <div className="text-[#b9bdc3]">Raining now</div>
      </div>
    </div>
    <svg viewBox="0 0 16 16" className="w-[16px] h-[16px] ml-px" fill="#4cc2f4">
      <path d="M0 0h7.500v7.500H0zM8.500 0H16v7.500H8.500zM0 8.500h7.500V16H0zM8.500 8.500H16V16H8.500z" />
    </svg>
    <div className="flex items-center w-[66px] h-[21px] ml-[9px] mr-[3px] rounded-full bg-[#1e3446] pl-[15px] text-[8.500px]">
      <svg viewBox="0 0 10 10" className="w-[10px] h-[10px]" fill="none" stroke="#fff" strokeWidth="1.200"><circle cx="4" cy="4" r="3.200" /><path d="M6.500 6.500l3 3" /></svg>
      <span className="ml-[3px] tracking-[-0.3px]">Search</span>
    </div>
    <AppButton><path d="M0 5h10v10H0z" fill="#777" /><path d="M5 1h11v10H5z" fill="#e6e8ea" /><path d="M5 5h5v6H5z" fill="#aaa" /></AppButton>
    <AppButton><path d="M0 2h6l2 2h8v11H0z" fill="#f4c542" /><path d="M0 6h16v9H0z" fill="#fbd75f" /><path d="M3 11h10v4h-2v-2H5v2H3z" fill="#2f7fc4" /></AppButton>
    <AppButton>
      <circle cx="8" cy="8" r="7.500" fill="#1477c9" />
      <path d="M1 6a7.500 7.500 0 0 1 14.500 2c0 3-3 4-5.500 3 1.500-2 .5-5-3-5-3 0-5 2-6 5z" fill="#3fc89d" />
      <path d="M5 14C3 9 7 6 9 7c-2 2-1 5 5 5-2 3-6 4-9 2z" fill="#0b4f9c" />
    </AppButton>
    <AppButton>
      <circle cx="8" cy="8" r="7.500" fill="#e8453c" />
      <path d="M8 8L1.500 4.200A7.500 7.500 0 0 0 7 15.400z" fill="#37a853" />
      <path d="M8 8h7.500A7.500 7.500 0 0 1 7 15.400L10.500 9z" fill="#fbc116" />
      <path d="M8 4.500h6.700a7.500 7.500 0 0 1 .8 3.500l-4 .5z" fill="#fbc116" />
      <circle cx="8" cy="8" r="3.600" fill="#fff" />
      <circle cx="8" cy="8" r="2.700" fill="#4285f4" />
    </AppButton>
    <AppButton>
      <circle cx="8" cy="8" r="7.500" fill="#1ed760" />
      <path d="M3.500 5.500Q8 4 12.500 6M4 8.200Q8 7 12 8.700M4.500 10.700Q8 9.700 11 11.200" stroke="#0c1b12" strokeWidth="1.300" strokeLinecap="round" />
    </AppButton>
    <AppButton><Recorder /></AppButton>
    <AppButton>
      <path d="M7 1v11.500C3 12.500 1 10 1 7s2-6 6-6z" stroke="#3aa0ae" strokeWidth="1.400" />
      <path d="M9 3.500V15c4 0 6-2 6-5.500S13 3.500 9 3.500z" stroke="#d23b4b" strokeWidth="1.400" />
    </AppButton>
    <AppButton>
      <circle cx="8" cy="8" r="7.500" fill="#6fb545" />
      <path d="M4 4l1 5c.5 3 4.500 3 5 0V4M10 9c0 2 2 3 4 2" stroke="#fff" strokeWidth="2" />
    </AppButton>
    <AppButton>
      <path d="M.5 2h15v12H.5z" fill="#d9e9f7" stroke="#8ba7c0" />
      <path d="M2 12V8l2-2 2 4 1-5 2 3 2-1 1 2 2-4v7z" fill="#5f9fd4" />
    </AppButton>
    <AppButton active="bg-[#4a2a2c]">
      <circle cx="8" cy="8" r="6.500" fill="#2f9fd8" />
      <path d="M3.500 8l8.500-3.500-1.500 7.500-2.500-2-1.500 1.500L6 9z" fill="#fff" />
    </AppButton>
    <AppButton><Recorder /></AppButton>
    <AppButton>
      <AnsysTile label="WB">
        <path d="M8 .8l2 2-2 2-2-2zM5 4l2 2-2 2-2-2zM11 4l2 2-2 2-2-2zM8 5.500l2 2-2 2-2-2z" stroke="#dfa02c" />
      </AnsysTile>
    </AppButton>
    <AppButton>
      <AnsysTile label="SC"><path d="M5 1l7 3.500L5 9zM5 4l4 1.500" stroke="#e0a42d" strokeWidth="1.600" /></AnsysTile>
    </AppButton>
    <AppButton active="bg-[#1f3344]">
      <AnsysTile label="M">
        <circle cx="6" cy="6.500" r="2.500" stroke="#e0a42d" strokeWidth="1.400" />
        <circle cx="11" cy="2.800" r="1.700" stroke="#e0a42d" strokeWidth="1.200" />
      </AnsysTile>
    </AppButton>
    <div className="flex-1" />
    <div className="flex items-center shrink-0 [&>svg]:shrink-0 mr-[13px]">
      <svg viewBox="0 0 8 6" className="w-[8px] h-[6px] mr-[12px]" fill="none" stroke="#fff" strokeWidth="1.200"><path d="M1 5l3-3 3 3" /></svg>
      <svg viewBox="0 0 12 12" className="w-[12px] h-[12px] mr-[9px]"><circle cx="6" cy="6" r="5.200" fill="#111" stroke="#ddd" /><circle cx="6" cy="6" r="3.400" fill="#62d12a" /></svg>
      <svg viewBox="0 0 12 12" className="w-[12px] h-[12px] mr-[11px]" fill="none"><path d="M0 0h12v12H0z" fill="#b92a22" /><path d="M10 3H4L2.500 5 9.500 7 8 9H2" stroke="#f3d5d1" strokeWidth="1.300" /></svg>
      <svg viewBox="0 0 10 12" className="w-[10px] h-[12px] mr-[10px]" fill="none" stroke="#ccd3db"><rect x="3.500" y="1" width="3" height="6" rx="1.500" /><path d="M1.500 5c0 5 7 5 7 0M5 9v2.500" /></svg>
      <div className="w-[20px] mr-[12px] text-center leading-[10.500px]"><div>ENG</div><div>US</div></div>
      <svg viewBox="0 0 12 10" className="w-[11px] h-[10px] mr-[5px]" fill="none" stroke="#fff"><path d="M.5 3.500Q6-1 11.500 3.500M2.500 5.500Q6 2.500 9.500 5.500M4.200 7.300Q6 5.800 7.800 7.300" /><circle cx="6" cy="8.700" r=".6" fill="#fff" /></svg>
      <svg viewBox="0 0 11 10" className="w-[11px] h-[10px] mr-[5px]" fill="none" stroke="#fff"><path d="M1 3.500h2L5.500 1v8L3 6.500H1zM7 3.500q1.500 1.500 0 3" /><path d="M8.700 2q3 3 0 6" stroke="#777" /></svg>
      <svg viewBox="0 0 12 10" className="w-[12px] h-[10px] mr-[6px]" fill="none" stroke="#fff"><rect x="1.500" y="2.500" width="8.500" height="5.500" rx="1" /><path d="M11.300 4v2" /><path d="M3 4h3v3H3zM1 1v3M3.500 1v3" fill="#fff" /></svg>
      <div className="w-[46px] text-right leading-[10.500px] whitespace-nowrap tracking-[-0.15px]"><div>6:48 PM</div><div>12/16/2022</div></div>
      <svg viewBox="0 0 12 12" className="w-[11px] h-[11px] ml-[5px]" fill="none" stroke="#fff"><path d="M5 2.500a3 3 0 0 0-2.500 3V8L1 9.500h9V7M4.500 10.500q1.200 1 2.500 0M6.500 2h2L6.500 4.500h2M9.500 1h1.500L9.500 3H11" /></svg>
    </div>
  </div>
);

export default function App() {
  return (
    <div className="w-[1280px] h-[720px] flex flex-col overflow-hidden bg-[#eeeef0] font-['Open_Sans',sans-serif]">
      <TitleBar />
      <TabRow />
      <Ribbon />
      <div className="flex flex-1 min-h-0 pt-px">
        <div className="flex flex-col w-[192px] shrink-0">
          <OutlinePanel />
          <DetailsPanel />
        </div>
        <div className="w-[3px] shrink-0" />
        <div className="flex flex-col w-[1085px] shrink-0">
          <GraphicsToolbar />
          <Viewport />
          <Messages />
        </div>
      </div>
      <StatusBar />
      <Taskbar />
    </div>
  );
}
